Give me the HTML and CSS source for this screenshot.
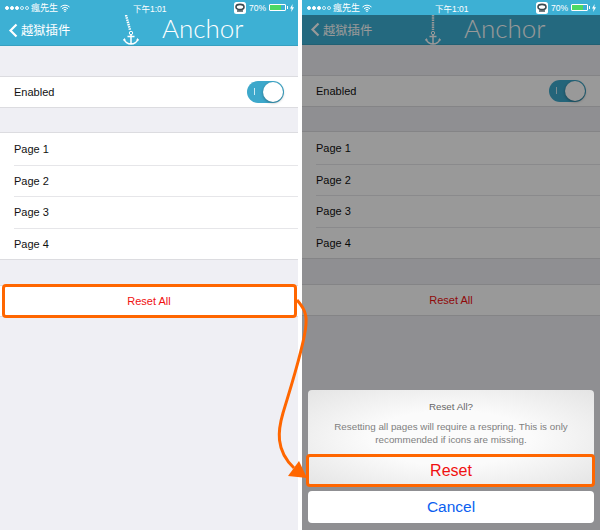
FILE: index.html

```html
<!DOCTYPE html>
<html lang="zh-Hant">
<head>
  <meta charset="UTF-8">
  <title>Anchor</title>
  <link rel="stylesheet" href="styles.css">
</head>
<body>
  <div class="screens">
    <div class="phone">
      <div class="status">
        <span class="dots"><i></i><i></i><i></i><i class="off"></i><i class="off"></i></span>
        <span class="carrier">瘋先生</span>
        <svg class="wifi" width="10" height="8" viewBox="0 0 10 8"><path d="M.5 3a6.5 6.5 0 0 1 9 0M2 4.6a4.3 4.3 0 0 1 6 0M3.5 6.1a2.1 2.1 0 0 1 3 0" fill="none" stroke="#fff"/><circle cx="5" cy="7.2" r=".8" fill="#fff"/></svg>
        <span class="time">下午1:01</span>
        <span class="status-right">
          <svg width="12" height="12" viewBox="0 0 12 12"><rect width="12" height="12" rx="2.5" fill="#fff"/><ellipse cx="6" cy="5" rx="4" ry="2.6" fill="none" stroke="#3a4a50" stroke-width="1.6"/><path d="M3 9h6" stroke="#3a4a50" stroke-width="1.4"/></svg>
          <span class="pct">70%</span>
          <span class="battery"><span class="level"></span></span>
          <svg width="4" height="8" viewBox="0 0 4 8"><path d="M2.6 0 0 4.6h1.6L1.2 8 4 3.2H2.3z" fill="#fff"/></svg>
        </span>
      </div>
      <div class="nav">
        <span class="back">
          <svg width="10" height="15" viewBox="0 0 10 15"><path d="M8.5 1.5 2.5 7.5l6 6" fill="none" stroke="currentColor" stroke-width="2.2"/></svg>
          <span>越獄插件</span>
        </span>
        <svg class="anchor" width="16" height="31" viewBox="0 0 16 31"><path d="M3 1l4 15" stroke="currentColor" stroke-width="2.4" stroke-dasharray="1.5 .8" fill="none"/><circle cx="8" cy="19" r="1.7" fill="none" stroke="currentColor"/><path d="M8 20v10M4.5 22.5h7M1 25c.5 3 4 5 7 5s6.500-2 7-5" fill="none" stroke="currentColor" stroke-width="1.5"/><path d="M0 26.500l1.500-2.500 1.500 2.500zM13 26.500l1.500-2.500 1.500 2.500z" fill="currentColor"/></svg>
        <span class="app-title">Anchor</span>
      </div>
      <div class="body">
        <div class="group">
          <div class="row single">
            <span>Enabled</span>
            <span class="switch"><span class="mark"></span><span class="knob"></span></span>
          </div>
        </div>
        <div class="group">
          <div class="row">Page 1</div>
          <div class="row">Page 2</div>
          <div class="row">Page 3</div>
          <div class="row">Page 4</div>
        </div>
        <div class="group">
          <div class="row single reset hl">Reset All</div>
        </div>
      </div>
    </div>

    <div class="phone dimmed">
      <div class="status">
        <span class="dots"><i></i><i></i><i></i><i class="off"></i><i class="off"></i></span>
        <span class="carrier">瘋先生</span>
        <svg class="wifi" width="10" height="8" viewBox="0 0 10 8"><path d="M.5 3a6.5 6.5 0 0 1 9 0M2 4.6a4.3 4.3 0 0 1 6 0M3.5 6.1a2.1 2.1 0 0 1 3 0" fill="none" stroke="#fff"/><circle cx="5" cy="7.2" r=".8" fill="#fff"/></svg>
        <span class="time">下午1:01</span>
        <span class="status-right">
          <svg width="12" height="12" viewBox="0 0 12 12"><rect width="12" height="12" rx="2.5" fill="#fff"/><ellipse cx="6" cy="5" rx="4" ry="2.6" fill="none" stroke="#3a4a50" stroke-width="1.6"/><path d="M3 9h6" stroke="#3a4a50" stroke-width="1.4"/></svg>
          <span class="pct">70%</span>
          <span class="battery"><span class="level"></span></span>
          <svg width="4" height="8" viewBox="0 0 4 8"><path d="M2.6 0 0 4.6h1.6L1.2 8 4 3.2H2.3z" fill="#fff"/></svg>
        </span>
      </div>
      <div class="nav">
        <span class="back">
          <svg width="10" height="15" viewBox="0 0 10 15"><path d="M8.5 1.5 2.5 7.5l6 6" fill="none" stroke="currentColor" stroke-width="2.2"/></svg>
          <span>越獄插件</span>
        </span>
        <svg class="anchor" width="16" height="31" viewBox="0 0 16 31"><path d="M8 1v15" stroke="currentColor" stroke-width="2.4" stroke-dasharray="1.5 .8" fill="none"/><circle cx="8" cy="19" r="1.7" fill="none" stroke="currentColor"/><path d="M8 20v10M4.500 22.500h7M1 25c.5 3 4 5 7 5s6.500-2 7-5" fill="none" stroke="currentColor" stroke-width="1.5"/><path d="M0 26.500l1.500-2.500 1.500 2.500zM13 26.500l1.500-2.500 1.500 2.500z" fill="currentColor"/></svg>
        <span class="app-title">Anchor</span>
      </div>
      <div class="body">
        <div class="group">
          <div class="row single">
            <span>Enabled</span>
            <span class="switch"><span class="mark"></span><span class="knob"></span></span>
          </div>
        </div>
        <div class="group">
          <div class="row">Page 1</div>
          <div class="row">Page 2</div>
          <div class="row">Page 3</div>
          <div class="row">Page 4</div>
        </div>
        <div class="group">
          <div class="row single reset">Reset All</div>
        </div>
      </div>
      <div class="shade"></div>
      <div class="sheet">
        <div class="alert">
          <div class="alert-msg">
            <div class="alert-title">Reset All?</div>
            <div class="alert-text">Resetting all pages will require a respring. This is only recommended if icons are missing.</div>
          </div>
          <div class="alert-btn reset hl">Reset</div>
        </div>
        <div class="cancel">Cancel</div>
      </div>
    </div>
  </div>

  <svg class="arrow" width="60" height="200" viewBox="0 0 60 200">
    <path d="M27 2C33 9 37 15 36 26C35 45 22 85 13 115C8 132 5 152 24 170" fill="none" stroke="#ff6600" stroke-width="3"/>
    <path d="M37 180 18 178 29 163z" fill="#ff6600"/>
  </svg>
</body>
</html>
```

FILE: styles.css

```css
* {
  box-sizing: border-box;
}
body {
  margin: 0;
  background: #fff;
  font-family: 'Liberation Sans', 'Noto Sans CJK TC', sans-serif;
  position: relative;
  width: 600px;
  height: 530px;
  overflow: hidden;
}
.screens {
  display: flex;
  justify-content: space-between;
  height: 530px;
}
.phone {
  position: relative;
  width: 298px;
  height: 530px;
  background: #efeff4;
  overflow: hidden;
}

/* status bar + nav */
.status {
  position: relative;
  z-index: 3;
  display: flex;
  align-items: center;
  height: 15px;
  padding: 0 4px 0 5px;
  background: #3db0d4;
  color: #fff;
  font-size: 9px;
}
.dots {
  display: flex;
  gap: 1px;
  margin-right: 2px;
}
.dots i {
  width: 4px;
  height: 4px;
  border-radius: 50%;
  background: #fff;
  border: 1px solid #fff;
}
.dots i.off {
  background: none;
  border: 1px solid #d8eff6;
}
.carrier {
  width: 29px;
  font-size: 9px;
}
.time {
  position: absolute;
  left: 133px;
  font-size: 8.500px;
}
.status-right {
  margin-left: auto;
  display: flex;
  align-items: center;
  gap: 3px;
}
.pct {
  font-size: 8.500px;
}
.battery {
  position: relative;
  width: 17px;
  height: 7px;
  margin-right: 1px;
  border: 1px solid #fff;
  border-radius: 1px;
}
.battery::after {
  content: "";
  position: absolute;
  right: -3px;
  top: 1px;
  width: 1px;
  height: 3px;
  background: #fff;
}
.level {
  display: block;
  width: 11px;
  height: 5px;
  background: #4cd964;
}
.nav {
  position: relative;
  display: flex;
  align-items: center;
  height: 31px;
  background: #3db0d4;
  color: #fff;
  border-bottom: 1px solid #37a0c0;
}
.back {
  display: flex;
  align-items: center;
  gap: 3px;
  margin-left: 8px;
  font-size: 12.300px;
}
.anchor {
  position: absolute;
  left: 123px;
  top: -1px;
}
.app-title {
  position: absolute;
  left: 162px;
  top: -3px;
  font-family: Lato, sans-serif;
  font-weight: 300;
  font-size: 26px;
}

/* list */
.body {
  padding-top: 30px;
}
.group {
  background: #fff;
  border-top: 1px solid #dcdce0;
  border-bottom: 1px solid #dcdce0;
  margin-bottom: 24px;
}
.group:last-child {
  margin-top: 25px;
}
.row {
  position: relative;
  display: flex;
  align-items: center;
  justify-content: space-between;
  height: 31.500px;
  margin-left: 14px;
  font-size: 11px;
  color: #111;
  border-top: 1px solid #e6e6e9;
}
.row:first-child {
  border-top: none;
}
.row.single {
  height: 30px;
}
.row.reset {
  justify-content: center;
  margin-left: 0;
  color: #f01010;
}
.hl::after {
  content: "";
  position: absolute;
  left: 2px;
  right: 1px;
  top: -2px;
  bottom: -2px;
  border: 3px solid #ff6600;
  border-radius: 4px;
}
.switch {
  position: relative;
  width: 37px;
  height: 22px;
  margin-right: 14px;
  border-radius: 11px;
  background: #3da8cb;
}
.mark {
  position: absolute;
  left: 7px;
  top: 7px;
  width: 1px;
  height: 7px;
  background: #cdeaf4;
}
.knob {
  position: absolute;
  right: 1px;
  top: 1px;
  width: 20px;
  height: 20px;
  border-radius: 50%;
  background: #fff;
  box-shadow: 0 1px 3px rgba(0,0,0,.35);
}

/* right screen */
.dimmed .nav {
  height: 30px;
}
.shade {
  position: absolute;
  inset: 0;
  z-index: 1;
  background: rgba(0,0,0,.4);
}
.sheet {
  position: absolute;
  z-index: 2;
  left: 6px;
  right: 6px;
  top: 390px;
}
.alert {
  background: radial-gradient(ellipse at center, #fbfbfb 40%, #e4e4e4 100%);
  border-radius: 4px;
}
.alert-msg {
  height: 65px;
  padding: 11px 14px 0;
  text-align: center;
  color: #808080;
  font-size: 9.800px;
  border-bottom: 1px solid #ccc;
}
.alert-title {
  margin-bottom: 8px;
  font-size: 9.800px;
  color: #666;
}
.alert-text {
  line-height: 13px;
}
.alert-btn {
  position: relative;
  height: 31px;
  display: flex;
  align-items: center;
  justify-content: center;
  font-size: 16px;
  color: #f01010;
}
.alert-btn.hl::after {
  left: -2px;
  right: -1px;
  top: -1px;
  bottom: -1px;
}
.cancel {
  margin-top: 5px;
  height: 32px;
  display: flex;
  align-items: center;
  justify-content: center;
  background: #fff;
  border-radius: 4px;
  font-size: 15.500px;
  color: #0a60f0;
}

/* callout between the two screens */
.arrow {
  position: absolute;
  left: 270px;
  top: 298px;
  z-index: 5;
}
```
